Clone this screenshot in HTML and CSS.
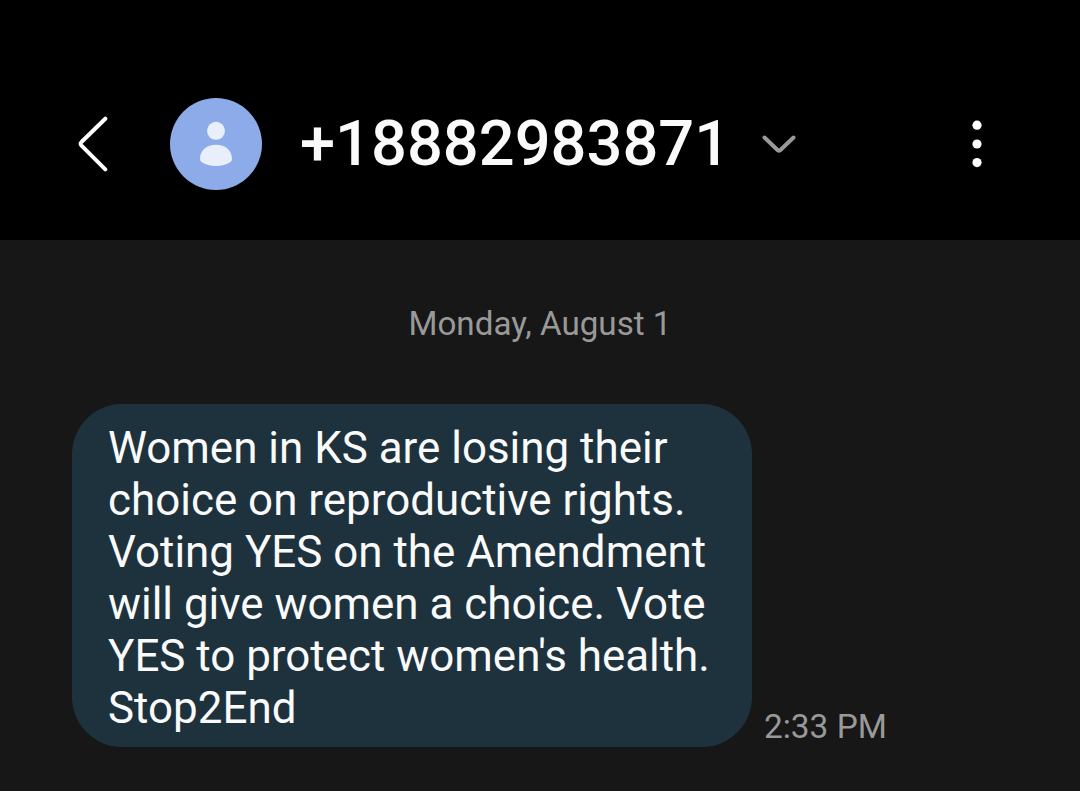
FILE: index.html
```html
<!DOCTYPE html>
<html lang="en">
<head>
  <meta charset="UTF-8">
  <meta name="viewport" content="width=device-width, initial-scale=1.0">
  <title>Messages</title>
  <link rel="stylesheet" href="styles.css">
</head>
<body>
  <header class="top-bar">
    <svg class="back" viewBox="0 0 32 58" width="32" height="58">
      <path d="M29.3 3.7 L5.5 27 Q3.8 28.8 5.5 30.6 L29.3 54.3"/>
    </svg>
    <div class="avatar">
      <svg viewBox="0 0 92 92" width="92" height="92">
        <circle cx="46" cy="32.8" r="9"/>
        <path d="M30 61 C30 52 37 46.8 46 46.8 C55 46.8 62 52 62 61 Q62 63 60.5 64 C53 69.4 39 69.4 31.5 64 Q30 63 30 61 Z"/>
      </svg>
    </div>
    <h1 class="number">+18882983871</h1>
    <svg class="expand" viewBox="0 0 36 22" width="36" height="22">
      <path d="M3.5 4.5 L16.8 17.2 Q18 18.2 19.2 17.2 L32.5 4.5"/>
    </svg>
    <svg class="menu" viewBox="0 0 10 48" width="10" height="48">
      <circle cx="5" cy="5.2" r="4.6"/>
      <circle cx="5" cy="24" r="4.6"/>
      <circle cx="5" cy="42.6" r="4.6"/>
    </svg>
  </header>

  <main class="thread">
    <div class="date">Monday, August 1</div>
    <div class="message">
      <p class="bubble">
        Women in KS are losing their<br>
        choice on reproductive rights.<br>
        Voting YES on the Amendment<br>
        will give women a choice. Vote<br>
        YES to protect women's health.<br>
        Stop2End
      </p>
      <span class="time">2:33 PM</span>
    </div>
  </main>
</body>
</html>
```
FILE: styles.css
```css
* {
  box-sizing: border-box;
}
body {
  margin: 0;
  height: 791px;
  overflow: hidden;
  background-color: #171717;
  font-family: Roboto, sans-serif;
}
.top-bar {
  display: flex;
  align-items: center;
  height: 240px;
  padding: 48px 98px 0 76px;
  background-color: #000;
}
.back, .expand {
  fill: none;
  stroke: #fff;
  stroke-width: 4;
  stroke-linecap: round;
  stroke-linejoin: round;
}
.avatar {
  width: 92px;
  height: 92px;
  margin-left: 62px;
  border-radius: 50%;
  background-color: #8cabe8;
}
.avatar svg {
  display: block;
  fill: #e8eefa;
}
.number {
  width: 424px;
  margin: 0 0 2px 38px;
  color: #fafafa;
  font-size: 63.2px;
  font-weight: 500;
  line-height: 80px;
  white-space: nowrap;
}
.expand {
  margin-left: 37px;
  stroke: #999;
}
.menu {
  margin-left: auto;
  fill: #fff;
}
.thread {
  padding: 64px 72px 0;
}
.date {
  color: #999;
  font-size: 33.2px;
  line-height: 39px;
  text-align: center;
}
.message {
  display: flex;
  align-items: flex-end;
  margin-top: 61px;
}
.bubble {
  width: 680px;
  height: 343px;
  margin: 0;
  padding: 18px 36px;
  border-radius: 50px;
  background-color: #1e323e;
  color: #fafafa;
  font-size: 43.93px;
  line-height: 52px;
  white-space: nowrap;
}
.time {
  margin: 0 0 0 12px;
  color: #999;
  font-size: 33.4px;
  line-height: 40px;
}
```
